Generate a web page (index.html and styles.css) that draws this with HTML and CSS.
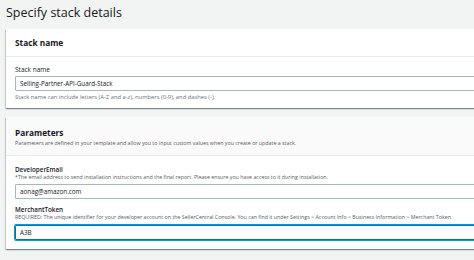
FILE: index.html
```html
<!DOCTYPE html>
<html>
<head>
<meta charset="utf-8">
<link rel="stylesheet" href="styles.css">
</head>
<body>
<div class="page">
  <h1 class="title">Specify stack details</h1>
  <section class="card">
    <div class="card-head card-head-plain">
      <h2 class="card-title">Stack name</h2>
    </div>
    <div class="card-body card-body-stack">
      <div class="field">
        <label class="label-plain">Stack name</label>
        <div class="input">Selling-Partner-API-Guard-Stack</div>
        <div class="hint">Stack name can include letters (A-Z and a-z), numbers (0-9), and dashes (-).</div>
      </div>
    </div>
  </section>
  <section class="card card-params">
    <div class="card-head">
      <h2 class="card-title">Parameters</h2>
      <div class="desc">Parameters are defined in your template and allow you to input custom values when you create or update a stack.</div>
    </div>
    <div class="card-body">
      <div class="field">
        <label class="label">DeveloperEmail</label>
        <div class="desc">*The email address to send installation instructions and the final report. Please ensure you have access to it during installation.</div>
        <div class="input">aonag@amazon.com</div>
      </div>
      <div class="field">
        <label class="label">MerchantToken</label>
        <div class="desc">REQUIRED: The unique identifier for your developer account on the SellerCentral Console. You can find it under Settings &gt; Account Info &gt; Business Information &gt; Merchant Token.</div>
        <div class="input focus">A3B</div>
      </div>
    </div>
  </section>
</div>
</body>
</html>
```
FILE: styles.css
```css
html, body {
  margin: 0;
  padding: 0;
  background: #f2f3f3;
  overflow: hidden;
  font-family: "Open Sans", "Noto Sans", sans-serif;
  color: #16191f;
}
.page {
  padding: 3px 0 0 6px;
  width: 490px;
}
.title {
  margin: 0 0 6px 0;
  font-size: 12.5px;
  font-weight: 400;
  line-height: 20px;
  color: #16191f;
}
.card {
  background: #fff;
  box-shadow: 0 1px 1px 0 rgba(0, 28, 36, 0.3), 1px 1px 1px 0 rgba(0, 28, 36, 0.15), -1px 1px 1px 0 rgba(0, 28, 36, 0.15);
  margin-bottom: 9px;
}
.card-head {
  padding: 10px 9px 8px;
  border-bottom: 1px solid #eaeded;
  background: #fafafa;
}
.card-head .card-title {
  line-height: 12px;
}
.card-head-plain {
  background: #fff;
  padding: 9px 9px 8px;
}
.card-head-plain .card-title {
  line-height: 10px;
}
.card-title {
  margin: 0;
  font-size: 8.3px;
  font-weight: 700;
}
.card-body {
  padding: 10px 9px 9px;
  display: flex;
  flex-direction: column;
  gap: 7px;
}
.card-body-stack {
  padding: 8px 9px 7px;
}
.field {
  display: flex;
  flex-direction: column;
}
.label-plain {
  font-size: 6.5px;
  line-height: 9px;
  margin-bottom: 2px;
}
.label {
  font-size: 6.3px;
  font-weight: 600;
  line-height: 8px;
}
.desc {
  font-size: 5.3px;
  line-height: 7px;
  color: #545b64;
  margin-bottom: 3px;
}
.card-head .desc {
  line-height: 8px;
  margin-bottom: 0;
}
.field .desc + .input.focus {
  margin-top: 1px;
}
.hint {
  font-size: 5.8px;
  line-height: 8px;
  color: #687078;
  margin-top: 2px;
}
.input {
  height: 13px;
  border: 1px solid #aab7b8;
  border-radius: 1px;
  padding: 0 4px;
  font-size: 6.3px;
  line-height: 13px;
  color: #16191f;
  margin-right: -20px;
}
.input.focus {
  border-color: #0073bb;
  box-shadow: 0 0 0 1px #00a1c9;
}
```
